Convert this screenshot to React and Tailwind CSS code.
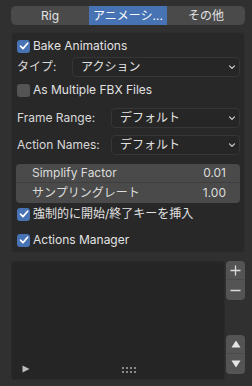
import React from 'react';

const font = { fontFamily: 'Inter, "Noto Sans CJK JP", sans-serif' };

const Check = ({ on }) => (
  <div className={`w-[13px] h-[13px] rounded-[3px] flex items-center justify-center shrink-0 ${on ? 'bg-[#4772b3]' : 'bg-[#545454]'}`}>
    {on && (
      <svg width="10" height="10" viewBox="0 0 10 10">
        <path d="M1.5 5.2 L4 7.6 L8.6 2.2" fill="none" stroke="#fff" strokeWidth="1.7" strokeLinecap="round" strokeLinejoin="round" />
      </svg>
    )}
  </div>
);

const CheckRow = ({ on, label, className = '' }) => (
  <div className={`flex items-center h-[20px] pl-[5px] gap-[3px] ${className}`}>
    <Check on={on} />
    <span className="text-[12px] text-[#e2e2e2]">{label}</span>
  </div>
);

const Chevron = () => (
  <svg width="8" height="6" viewBox="0 0 8 6" className="shrink-0">
    <path d="M1.5 1.8 L4 4.3 L6.5 1.8" fill="none" stroke="#d0d0d0" strokeWidth="1.2" strokeLinecap="round" strokeLinejoin="round" />
  </svg>
);

const DropRow = ({ label, value, left, className = '' }) => (
  <div className={`flex items-center h-[20px] ${className}`}>
    <span className="pl-[5px] text-[12px] text-[#d8d8d8] shrink-0" style={{ width: left - 12 }}>{label}</span>
    <div className="flex-1 mr-[4px] h-full flex items-center justify-between bg-[#262626] border border-[#363636] rounded-[4px] pl-[8px] pr-[3px]">
      <span className="text-[12px] text-[#e2e2e2]">{value}</span>
      <Chevron />
    </div>
  </div>
);

export default function App() {
  return (
    <div className="w-[252px] h-[386px] bg-[#303030] pl-[11px] pr-[7px] overflow-hidden select-none" style={font}>
      {/* tabs */}
      <div className="flex h-[19px] mt-[6px] rounded-[5px] overflow-hidden bg-[#4a4a4a] text-[12px] text-[#e2e2e2]">
        <div className="w-[78px] flex items-center justify-center">Rig</div>
        <div className="w-[78px] flex items-center justify-center bg-[#4772b3] text-white">アニメーシ...</div>
        <div className="flex-1 flex items-center justify-center">その他</div>
      </div>

      {/* panel */}
      <div className="mt-[7px] h-[221px] rounded-[4px] bg-[#282828] border border-[#2e2e2e] pt-[3px]">
        <CheckRow on label="Bake Animations" />
        <DropRow label="タイプ:" value="アクション" left={72} className="mt-[1px]" />
        <CheckRow label="As Multiple FBX Files" className="mt-[3px]" />
        <DropRow label="Frame Range:" value="デフォルト" left={111} className="mt-[8px]" />
        <DropRow label="Action Names:" value="デフォルト" left={111} className="mt-[7px]" />
        <div className="mt-[9px] mx-[4px] rounded-[4px] bg-[#4a4a4a] text-[12px] text-[#dcdcdc] overflow-hidden">
          <div className="h-[19px] flex items-center justify-between pl-[16px] pr-[14px] border-b border-[#3e3e3e]">
            <span>Simplify Factor</span>
            <span>0.01</span>
          </div>
          <div className="h-[20px] flex items-center justify-between pl-[16px] pr-[14px]">
            <span>サンプリングレート</span>
            <span>1.00</span>
          </div>
        </div>
        <CheckRow on label="強制的に開始/終了キーを挿入" className="mt-[1px]" />
        <CheckRow on label="Actions Manager" className="mt-[6px]" />
      </div>

      {/* list */}
      <div className="mt-[8px] flex">
        <div className="w-[214px] h-[119px] bg-[#252525] border border-[#2a2a2a] rounded-[3px] flex items-end justify-between pb-[6px] pl-[10px]">
          <svg width="8" height="8" viewBox="0 0 8 8">
            <path d="M0.5 0.5 L7.5 4 L0.5 7.5 Z" fill="#bdbdbd" />
          </svg>
          <div className="grid grid-cols-4 gap-x-[2px] gap-y-[2px] mr-[88px]">
            {Array.from({ length: 8 }).map((_, i) => (
              <div key={i} className="w-[2px] h-[2px] bg-[#8a8a8a]" />
            ))}
          </div>
        </div>
        <div className="flex flex-col ml-[1px] w-[19px]">
          <div className="rounded-[4px] bg-[#545454] overflow-hidden">
            <div className="h-[19px] flex items-center justify-center border-b border-[#4a4a4a]">
              <svg width="11" height="11" viewBox="0 0 11 11">
                <path d="M5.5 0.5 V10.5 M0.5 5.5 H10.5" stroke="#dcdcdc" strokeWidth="1.3" />
              </svg>
            </div>
            <div className="h-[20px] flex items-center justify-center">
              <svg width="11" height="11" viewBox="0 0 11 11">
                <path d="M0.5 5.5 H10.5" stroke="#dcdcdc" strokeWidth="1.3" />
              </svg>
            </div>
          </div>
          <div className="mt-[35px] rounded-[4px] bg-[#545454] overflow-hidden">
            <div className="h-[19px] flex items-center justify-center border-b border-[#4a4a4a]">
              <svg width="10" height="8" viewBox="0 0 10 8">
                <path d="M5 0.5 L9.5 7.5 L0.5 7.5 Z" fill="#e6e6e6" />
              </svg>
            </div>
            <div className="h-[20px] flex items-center justify-center">
              <svg width="10" height="8" viewBox="0 0 10 8">
                <path d="M0.5 0.5 L9.5 0.5 L5 7.5 Z" fill="#e6e6e6" />
              </svg>
            </div>
          </div>
        </div>
      </div>
    </div>
  );
}
